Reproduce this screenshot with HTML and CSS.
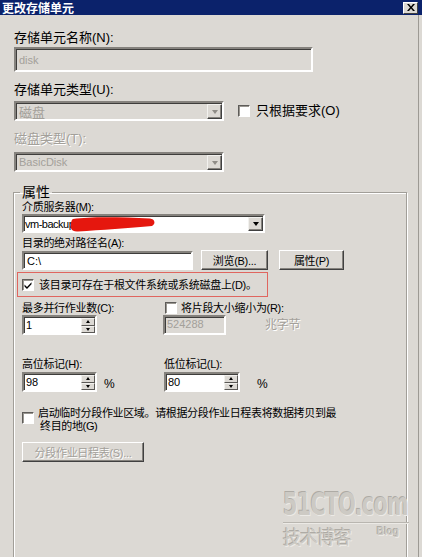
FILE: index.html
```html
<!DOCTYPE html>
<html>
<head>
<meta charset="utf-8">
<link rel="stylesheet" href="styles.css">
</head>
<body>
<div class="window">
  <div class="titlebar">
    <span class="title">更改存储单元</span>
    <span class="close"><svg width="8" height="7" viewBox="0 0 8 7"><path d="M0 0h2l2 2.4L6 0h2L5 3.5 8 7H6L4 4.6 2 7H0l3-3.5z" fill="#000"/></svg></span>
  </div>
  <div class="content">
    <div class="lbl-lg">存储单元名称(N):</div>
    <div class="edit disabled name-field"><span class="dtext">disk</span></div>

    <div class="lbl-lg mt-type">存储单元类型(U):</div>
    <div class="row type-row">
      <div class="combo disabled w210">
        <span class="val cjk-val">磁盘</span>
        <span class="ddbtn"><i class="tri-down gray"></i></span>
      </div>
      <label class="chk chk-lg"><span class="box"></span><span>只根据要求(O)</span></label>
    </div>

    <div class="lbl-lg mt-disk dis">磁盘类型(T):</div>
    <div class="combo disabled w210 combo2">
      <span class="val small-val">BasicDisk</span>
      <span class="ddbtn"><i class="tri-down gray"></i></span>
    </div>

    <fieldset class="group">
      <legend>属性</legend>
      <div class="lbl">介质服务器(M):</div>
      <div class="combo server">
        <span class="val small-val dark tight">vm-backup</span>
        <span class="ddbtn"><i class="tri-down"></i></span>
        <svg class="scribble" width="86" height="17" viewBox="0 0 86 17"><path d="M3 3 C 20 0.5, 50 1, 80 2.5 C 85 3, 86 8, 82 10 C 60 12, 30 14, 8 15.5 C 1 16, 0 12, 1 7 C 1.5 4.5, 2 3.5, 3 3 Z" fill="#e5170e"/></svg>
      </div>
      <div class="lbl mt-path">目录的绝对路径名(A):</div>
      <div class="row path-row">
        <div class="edit path-field"><span class="val small-val dark">C:\</span></div>
        <div class="btn browse">浏览(B)...</div>
        <div class="btn props">属性(P)</div>
      </div>
      <div class="redbox">
        <label class="chk"><span class="box checked"><svg width="8" height="8" viewBox="0 0 8 8"><path d="M0.5 3.5 L3 6 L7.5 1.2 L7.5 3.2 L3 8 L0.5 5.5 Z" fill="#000"/></svg></span><span>该目录可存在于根文件系统或系统磁盘上(D)。</span></label>
      </div>

      <div class="grid2 mt-jobs">
        <div class="lbl">最多并行作业数(C):</div>
        <label class="chk chk-col2"><span class="box"></span><span>将片段大小缩小为(R):</span></label>
      </div>
      <div class="grid2">
        <div class="spin w75">
          <span class="val small-val dark">1</span>
          <span class="btns"><span class="sb"><i class="tri-up"></i></span><span class="sb"><i class="tri-dn"></i></span></span>
        </div>
        <div class="row">
          <div class="edit disabled frag-field"><span class="dtext">524288</span></div>
          <span class="lbl dis unit">兆字节</span>
        </div>
      </div>

      <div class="grid2 mt-marks">
        <div class="lbl">高位标记(H):</div>
        <div class="lbl">低位标记(L):</div>
      </div>
      <div class="grid2 mt-spin2">
        <div class="row">
          <div class="spin w75">
            <span class="val small-val dark">98</span>
            <span class="btns"><span class="sb"><i class="tri-up"></i></span><span class="sb"><i class="tri-dn"></i></span></span>
          </div>
          <span class="pct pct1">%</span>
        </div>
        <div class="row">
          <div class="spin w76">
            <span class="val small-val dark">80</span>
            <span class="btns"><span class="sb"><i class="tri-up"></i></span><span class="sb"><i class="tri-dn"></i></span></span>
          </div>
          <span class="pct pct2">%</span>
        </div>
      </div>

      <label class="chk chk-multi"><span class="box"></span><span class="multi">启动临时分段作业区域。请根据分段作业日程表将数据拷贝到最<br><span class="indent">终目的地(G)</span></span></label>

      <div class="btn disabled-btn sched">分段作业日程表(S)...</div>
    </fieldset>

    <div class="watermark">
      <div class="wm-big"><span>51CTO.com</span></div>
      <div class="wm-line"></div>
      <div class="wm-row"><span class="wm-cn">技术博客</span><span class="wm-blog">Blog</span></div>
    </div>
  </div>
</div>
</body>
</html>
```

FILE: styles.css
```css
* { box-sizing: border-box; }
html, body { margin: 0; padding: 0; }
body {
  width: 422px;
  height: 557px;
  overflow: hidden;
  background: #dcd9d4;
  font-family: "Liberation Sans", "Noto Sans CJK SC", sans-serif;
  color: #000;
}
.window {
  position: relative;
  width: 422px;
  height: 557px;
  overflow: hidden;
  box-shadow: inset -3px 0 0 #dcd9d4, inset -4px 0 0 #9d9a94;
}
.titlebar {
  height: 15px;
  background: #0b226b;
  display: flex;
  align-items: center;
  justify-content: space-between;
  padding: 0 4px 0 2px;
}
.title {
  color: #fff;
  font-weight: bold;
  font-size: 12px;
  line-height: 15px;
  font-family: "Noto Sans CJK SC", sans-serif;
}
.close {
  width: 15px;
  height: 12px;
  background: #dcd9d4;
  border: 1px solid;
  border-color: #fff #404040 #404040 #fff;
  display: flex;
  align-items: center;
  justify-content: center;
}
.content {
  position: relative;
  padding: 15px 0 0 14px;
}
.lbl-lg { font-size: 13px; line-height: 15px; }
.lbl { font-size: 11px; line-height: 14px; letter-spacing: -0.3px; white-space: nowrap; }
.dis { color: #a3a09a; text-shadow: 1px 1px 0 #fff; }
.row { display: flex; align-items: center; }

/* sunken edit */
.edit {
  border: 2px solid;
  border-color: #85827d #fff #fff #85827d;
  box-shadow: inset 1px 1px 0 #3e3d3b;
  background: #fff;
  display: flex;
  align-items: center;
  padding-left: 3px;
}
.edit.disabled { background: #dcd9d4; }
.dtext { font-size: 11px; color: #a3a09a; }
.name-field { margin-top: 2px; width: 299px; height: 25px; }

.mt-type { margin-top: 10px; }
.type-row { margin-top: 4px; }
.mt-disk { margin-top: 10px; }

/* combo */
.combo {
  position: relative;
  display: flex;
  align-items: stretch;
  border: 2px solid;
  border-color: #85827d #fff #fff #85827d;
  box-shadow: inset 1px 1px 0 #3e3d3b;
  background: #fff;
  height: 20px;
}
.combo.disabled { background: #dcd9d4; }
.w210 { width: 210px; }
.combo2 { margin-top: 6px; }
.val { flex: 1; display: flex; align-items: center; padding-left: 3px; color: #a3a09a; white-space: nowrap; }
.cjk-val { font-size: 13px; }
.small-val { font-size: 11px; }
.val.dark { color: #000; }
.val.tight { padding-left: 1px; letter-spacing: -0.5px; }
.ddbtn {
  width: 15px;
  margin: 1px 0 0 0;
  background: #dcd9d4;
  border: 1px solid;
  border-color: #f2f1ee #404040 #404040 #f2f1ee;
  box-shadow: inset -1px -1px 0 #85827d;
  display: flex;
  align-items: center;
  justify-content: center;
}
.tri-down {
  width: 0; height: 0;
  border-left: 3.5px solid transparent;
  border-right: 3.5px solid transparent;
  border-top: 4px solid #000;
}
.tri-down.gray { border-top-color: #8f8c87; }

/* checkbox */
.chk { display: flex; align-items: center; font-size: 11px; line-height: 14px; letter-spacing: -0.3px; white-space: nowrap; }
.chk-lg { font-size: 13px; letter-spacing: 0; margin-left: 14px; }
.box {
  width: 12px; height: 12px;
  flex: none;
  background: #fff;
  border: 1px solid;
  border-color: #5e5c59 #fff #fff #5e5c59;
  box-shadow: inset 1px 1px 0 #9a9791;
  margin-right: 5px;
  display: flex;
  align-items: center;
  justify-content: center;
}
.chk-lg .box { margin-right: 6px; }

/* group */
.group {
  margin: 13px 0 0 -1px;
  width: 394px;
  height: 390px;
  padding: 0 0 0 8px;
  border: 1px solid #a19e98;
  box-shadow: inset 1px 1px 0 #fff, 1px 1px 0 #fff;
}
.group legend {
  font-size: 14px;
  line-height: 15px;
  padding: 0 2px;
  margin-left: -2px;
}
.server { width: 243px; height: 19px; }
.scribble { position: absolute; left: 46px; top: 0px; }
.mt-path { margin-top: 3px; }
.path-row { align-items: flex-start; }
.path-field { width: 171px; height: 19px; margin-top: 1px; padding-left: 0; }
.btn {
  height: 20px;
  background: #dcd9d4;
  border: 1px solid;
  border-color: #fff #404040 #404040 #fff;
  box-shadow: inset -1px -1px 0 #85827d;
  font-size: 11px;
  letter-spacing: -0.3px;
  display: flex;
  align-items: center;
  justify-content: center;
  white-space: nowrap;
}
.browse { width: 67px; margin-left: 8px; }
.props { width: 65px; margin-left: 11px; }

.redbox {
  margin: 2px 0 0 -5px;
  width: 251px;
  height: 25px;
  border: 1px solid #e0665f;
  padding-left: 4px;
  display: flex;
  align-items: center;
}
.redbox .box { margin-right: 5px; }

.grid2 { display: grid; grid-template-columns: 142px 1fr; align-items: center; }
.mt-jobs { margin-top: 4px; }
.chk-col2 { margin-left: 1px; }
.chk-col2 .box { margin-right: 4px; }

.spin {
  display: flex;
  height: 20px;
  border: 2px solid;
  border-color: #85827d #fff #fff #85827d;
  box-shadow: inset 1px 1px 0 #3e3d3b;
  background: #fff;
}
.spin .val { padding-left: 2px; }
.w75 { width: 75px; }
.w76 { width: 76px; }
.btns { width: 14px; display: flex; flex-direction: column; padding-top: 1px; }
.sb {
  flex: 1;
  background: #dcd9d4;
  border: 1px solid;
  border-color: #f2f1ee #5a5855 #5a5855 #f2f1ee;
  display: flex;
  align-items: center;
  justify-content: center;
}
.tri-up { width: 0; height: 0; border-left: 2.5px solid transparent; border-right: 2.5px solid transparent; border-bottom: 3px solid #000; }
.tri-dn { width: 0; height: 0; border-left: 2.5px solid transparent; border-right: 2.5px solid transparent; border-top: 3px solid #000; }

.frag-field { width: 63px; height: 20px; margin-left: -1px; padding-left: 2px; align-items: flex-start; padding-top: 1px; }
.unit { margin-left: 39px; font-size: 12px; }

.mt-marks { margin-top: 22px; }
.mt-spin2 { margin-top: 1px; }
.pct { font-size: 12px; }
.pct1 { margin-left: 7px; margin-top: 4px; }
.pct2 { margin-left: 17px; margin-top: 4px; }

.chk-multi { margin-top: 15px; align-items: flex-start; }
.chk-multi .box { margin-top: 5px; margin-right: 4px; }
.multi { line-height: 13px; letter-spacing: -0.35px; }
.indent { padding-left: 2px; }

.sched { width: 122px; margin-top: 9px; color: #a3a09a; text-shadow: 1px 1px 0 #fff; }

/* watermark overlay */
.watermark {
  position: absolute;
  left: 283px;
  top: 473px;
  width: 126px;
  color: #cdcac4;
}
.wm-big {
  height: 33px;
  white-space: nowrap;
}
.wm-big span {
  display: inline-block;
  font-family: "DejaVu Sans Condensed", "Liberation Sans", sans-serif;
  font-weight: bold;
  font-size: 32px;
  line-height: 33px;
  letter-spacing: -1px;
  transform: scaleX(0.72);
  transform-origin: left center;
  text-shadow: -1px -1px 0 #aeaba5, 1px 1px 0 #eceae6;
}
.wm-line { height: 1px; background: #b9b6b0; margin-top: 1px; box-shadow: 0 1px 0 #eceae6; }
.wm-row { display: flex; align-items: flex-start; margin-top: 3px; }
.wm-cn {
  font-family: "Noto Sans CJK SC", sans-serif;
  font-size: 18px;
  line-height: 20px;
  letter-spacing: -1px;
  text-shadow: -1px -1px 0 #aeaba5, 1px 1px 0 #eceae6;
}
.wm-blog {
  margin-left: 26px;
  font-size: 10px;
  line-height: 12px;
  font-weight: bold;
  text-shadow: -1px -1px 0 #aeaba5, 1px 1px 0 #eceae6;
}
```
